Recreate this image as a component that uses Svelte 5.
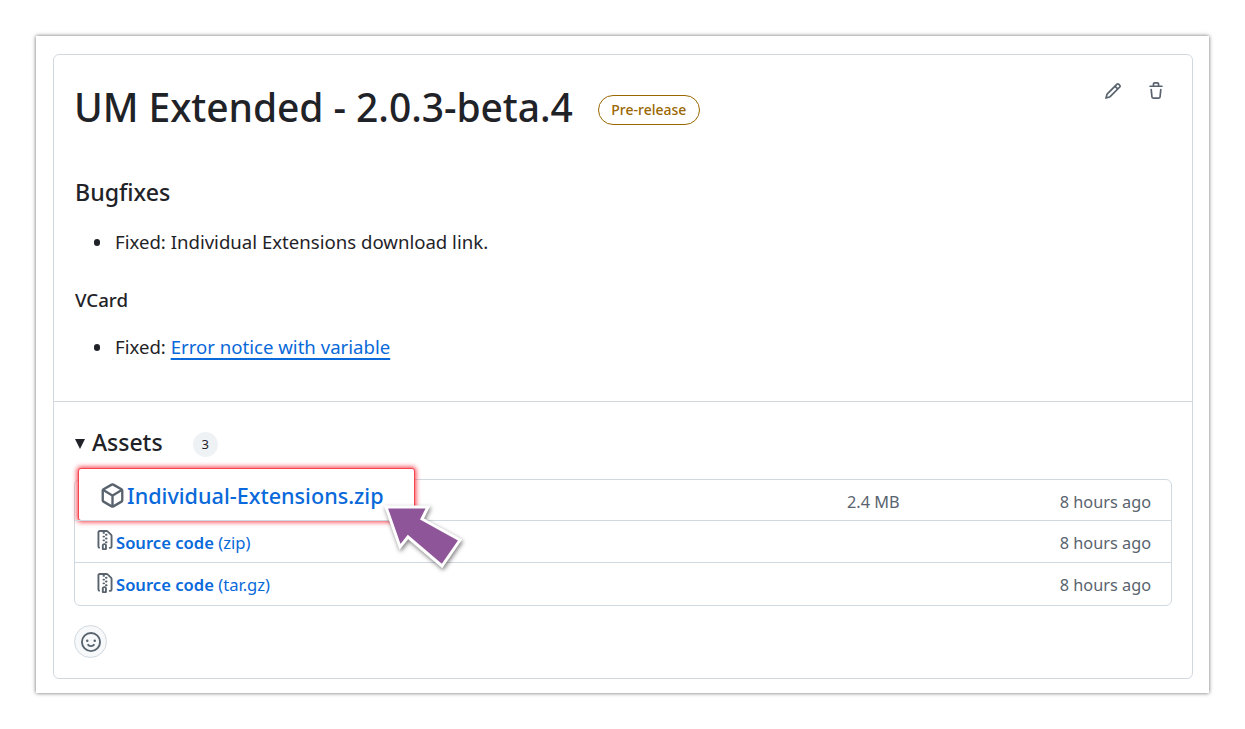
<script lang="ts">
	const assets = [
		{ name: 'Source code', kind: '(zip)' },
		{ name: 'Source code', kind: '(tar.gz)' }
	];
	const zipIcon =
		'M3.5 1.75v11.5c0 .09.048.173.126.217a.75.75 0 0 1-.752 1.298A1.748 1.748 0 0 1 2 13.25V1.75C2 .784 2.784 0 3.75 0h5.586c.464 0 .909.185 1.237.513l2.914 2.914c.329.328.513.773.513 1.237v8.586A1.75 1.75 0 0 1 12.25 15h-.5a.75.75 0 0 1 0-1.5h.5a.25.25 0 0 0 .25-.25V4.664a.25.25 0 0 0-.073-.177L9.513 1.573a.25.25 0 0 0-.177-.073H7.25a.75.75 0 0 1 0 1.5h-.5a.75.75 0 0 1 0-1.5h-3a.25.25 0 0 0-.25.25Zm3.75 8.75h.5c.966 0 1.75.784 1.75 1.75v3a.75.75 0 0 1-.75.75h-2.5a.75.75 0 0 1-.75-.75v-3c0-.966.784-1.75 1.75-1.75ZM6 5.25a.75.75 0 0 1 .75-.75h.5a.75.75 0 0 1 0 1.5h-.5A.75.75 0 0 1 6 5.25Zm.75 2.25h.5a.75.75 0 0 1 0 1.5h-.5a.75.75 0 0 1 0-1.5ZM8 6.75A.75.75 0 0 1 8.75 6h.5a.75.75 0 0 1 0 1.5h-.5A.75.75 0 0 1 8 6.75ZM8.75 3h.5a.75.75 0 0 1 0 1.5h-.5a.75.75 0 0 1 0-1.5ZM8 9.75A.75.75 0 0 1 8.75 9h.5a.75.75 0 0 1 0 1.5h-.5A.75.75 0 0 1 8 9.75Zm-1 2.5v2.25h1v-2.25a.25.25 0 0 0-.25-.25h-.5a.25.25 0 0 0-.25.25Z';
</script>

<div class="page">
	<div class="frame">
		<div class="card">
			<div class="top">
				<div class="title-row">
					<h1>UM Extended - 2.0.3-beta.4</h1>
					<span class="label">Pre-release</span>
					<div class="actions">
						<svg viewBox="0 0 16 16" width="18" height="18"><path d="M11.013 1.427a1.75 1.75 0 0 1 2.474 0l1.086 1.086a1.75 1.75 0 0 1 0 2.474l-8.61 8.61c-.21.21-.47.364-.756.445l-3.251.93a.75.75 0 0 1-.927-.928l.929-3.25c.081-.286.235-.547.445-.758l8.61-8.61Zm.176 4.823L9.75 4.81l-6.286 6.287a.253.253 0 0 0-.064.108l-.558 1.953 1.953-.558a.253.253 0 0 0 .108-.064Zm1.238-3.763a.25.25 0 0 0-.354 0L10.811 3.75l1.439 1.44 1.263-1.263a.25.25 0 0 0 0-.354Z" /></svg>
						<svg viewBox="0 0 16 16" width="18" height="18"><path d="M11 1.75V3h2.25a.75.75 0 0 1 0 1.5H2.75a.75.75 0 0 1 0-1.5H5V1.75C5 .784 5.784 0 6.75 0h2.5C10.216 0 11 .784 11 1.75ZM4.496 6.675l.66 6.6a.25.25 0 0 0 .249.225h5.19a.25.25 0 0 0 .249-.225l.66-6.6a.75.75 0 0 1 1.492.149l-.66 6.6A1.748 1.748 0 0 1 10.595 15h-5.19a1.75 1.75 0 0 1-1.741-1.575l-.66-6.6a.75.75 0 1 1 1.492-.15ZM6.5 1.75V3h3V1.75a.25.25 0 0 0-.25-.25h-2.5a.25.25 0 0 0-.25.25Z" /></svg>
					</div>
				</div>
				<h2>Bugfixes</h2>
				<ul class="first-list"><li>Fixed: Individual Extensions download link.</li></ul>
				<h3>VCard</h3>
				<ul class="last-list"><li>Fixed: <a href="#error">Error notice with variable</a></li></ul>
			</div>

			<div class="bottom">
				<div class="assets-head">
					<span class="caret"></span>
					<span class="assets-title">Assets</span>
					<span class="counter">3</span>
				</div>
				<div class="asset-list">
					<div class="row first">
						<div class="highlight">
							<svg class="pkg" viewBox="0 0 16 16" width="25" height="25"><path d="m8.878.392 5.25 3.045c.54.314.872.89.872 1.514v6.098a1.75 1.75 0 0 1-.872 1.514l-5.25 3.045a1.75 1.75 0 0 1-1.756 0l-5.25-3.045A1.75 1.75 0 0 1 1 11.049V4.951c0-.624.332-1.201.872-1.514L7.122.392a1.75 1.75 0 0 1 1.756 0ZM7.875 1.69l-4.63 2.685L8 7.133l4.755-2.758-4.63-2.685a.248.248 0 0 0-.25 0ZM2.5 5.677v5.372c0 .09.047.171.125.216l4.625 2.683V8.432Zm6.25 8.271 4.625-2.683a.25.25 0 0 0 .125-.216V5.677L8.75 8.432Z" /></svg>
							<a href="#zip" class="big-link">Individual-Extensions.zip</a>
						</div>
						<span class="size">2.4 MB</span>
						<span class="when">8 hours ago</span>
					</div>
					{#each assets as asset}
						<div class="row">
							<svg class="zip" viewBox="0 0 16 16" width="20" height="20"><path d={zipIcon} /></svg>
							<a href="#src" class="src"><b>{asset.name}</b> {asset.kind}</a>
							<span class="when">8 hours ago</span>
						</div>
					{/each}
				</div>
				<button class="react" aria-label="Add reaction">
					<svg viewBox="0 0 16 16" width="20" height="20"><path d="M8 0a8 8 0 1 1 0 16A8 8 0 0 1 8 0ZM1.5 8a6.5 6.5 0 1 0 13 0 6.5 6.5 0 0 0-13 0Zm3.82 1.636a.75.75 0 0 1 1.038.175l.007.009c.103.118.22.222.35.31.264.178.683.37 1.285.37.602 0 1.02-.192 1.285-.371.13-.088.247-.192.35-.31l.007-.008a.75.75 0 0 1 1.222.87l-.022-.015c.02.013.021.015.021.015v.001l-.001.002-.002.003-.005.007-.014.019a2.066 2.066 0 0 1-.184.213c-.16.166-.338.316-.53.445-.63.418-1.37.638-2.127.629-.946 0-1.652-.308-2.126-.63a3.331 3.331 0 0 1-.715-.657l-.014-.02-.005-.006-.002-.003v-.002h-.001l.613-.432-.614.43a.75.75 0 0 1 .183-1.044ZM12 7a1 1 0 1 1-2 0 1 1 0 0 1 2 0ZM5 8a1 1 0 1 1 0-2 1 1 0 0 1 0 2Zm5.25 2.25.592.416a97.71 97.71 0 0 0-.592-.416Z" /></svg>
				</button>
			</div>

			<svg class="arrow" viewBox="0 0 90 76" width="90" height="76">
				<polygon points="11,7 53,7 47,19 85,40 67,66 33,37 25,47" />
			</svg>
		</div>
	</div>
</div>

<style>
	:global(body) {
		background: #fff;
		font-family: 'Noto Sans', 'Open Sans', sans-serif;
		color: #1f2328;
	}

	.page {
		box-sizing: border-box;
		height: 729px;
		padding: 36px 0 0 36px;
	}

	.frame {
		box-sizing: border-box;
		width: 1173px;
		height: 657px;
		padding: 18px 16px 14px 17px;
		background: #fff;
		box-shadow: 0 0 4px rgba(0, 0, 0, 0.6);
	}

	.card {
		position: relative;
		box-sizing: border-box;
		height: 625px;
		border: 1px solid #d1d9e0;
		border-radius: 6px;
	}

	.top {
		box-sizing: border-box;
		height: 347px;
		padding: 0 21px;
		border-bottom: 1px solid #d1d9e0;
	}

	.title-row {
		display: flex;
		align-items: center;
		height: 104px;
	}

	h1 {
		margin: -2px 0 0 -1px;
		font-size: 39px;
		font-weight: 500;
		letter-spacing: -0.06px;
		white-space: nowrap;
	}

	.label {
		margin: 6px 0 0 25px;
		padding: 0 12.5px;
		height: 28px;
		line-height: 27px;
		border: 1px solid #9a6700;
		border-radius: 15px;
		font-size: 14px;
		font-weight: 500;
		color: #9a6700;
	}

	.actions {
		align-self: flex-start;
		display: flex;
		gap: 25px;
		margin: 27px 6px 0 auto;
	}

	.actions svg {
		fill: #59636e;
	}

	h2 {
		margin: 18px 0 0;
		font-size: 23.2px;
		line-height: 30px;
		font-weight: 500;
	}

	h3 {
		margin: 32px 0 0;
		font-size: 18.7px;
		line-height: 24px;
		font-weight: 500;
	}

	ul {
		list-style: none;
		margin: 0;
		padding-left: 40px;
	}

	.first-list {
		margin-top: 21px;
	}

	.last-list {
		margin-top: 21px;
	}

	li {
		position: relative;
		font-size: 18.6px;
		line-height: 28px;
	}

	li::before {
		content: '';
		position: absolute;
		left: -21.5px;
		top: 11px;
		width: 6.5px;
		height: 6.5px;
		border-radius: 50%;
		background: #1f2328;
	}

	li a {
		color: #0969da;
		text-decoration: underline;
		text-decoration-thickness: 1.5px;
		text-underline-offset: 4px;
	}

	.bottom {
		padding: 0 21px;
	}

	.assets-head {
		display: flex;
		align-items: center;
		height: 78px;
		padding-top: 2px;
		box-sizing: border-box;
	}

	.caret {
		width: 0;
		height: 0;
		border-left: 5.75px solid transparent;
		border-right: 5.75px solid transparent;
		border-top: 10px solid #1f2328;
		margin-top: 4px;
	}

	.assets-title {
		margin-left: 7px;
		font-size: 23px;
		font-weight: 500;
	}

	.counter {
		margin: 4px 0 0 30px;
		width: 25px;
		height: 25px;
		line-height: 25px;
		border-radius: 50%;
		background: #eff2f5;
		text-align: center;
		font-size: 13px;
	}

	.asset-list {
		border: 1px solid #d1d9e0;
		border-radius: 6px;
		margin: -1px -1px 0;
	}

	.row {
		position: relative;
		display: flex;
		align-items: center;
		height: 41px;
		padding: 0 20px;
		font-size: 16.3px;
		color: #59636e;
		border-top: 1px solid #d1d9e0;
	}

	.row.first {
		height: 40px;
		border-top: none;
		padding-top: 2px;
		box-sizing: border-box;
	}

	.row:last-child {
		height: 42px;
	}

	.zip {
		fill: #59636e;
		margin-top: -3px;
		flex: none;
	}

	.src {
		color: #0969da;
		text-decoration: none;
		font-size: 16.6px;
		margin: 1px 0 0 1px;
	}

	.src b {
		font-weight: 600;
	}

	.size {
		position: absolute;
		left: 772px;
		top: 11px;
	}

	.when {
		margin: 2px 0 0 auto;
	}

	.highlight {
		position: absolute;
		left: 3px;
		top: -12px;
		box-sizing: border-box;
		width: 337px;
		height: 53px;
		display: flex;
		align-items: center;
		padding: 1px 0 0 21px;
		gap: 2px;
		background: #fff;
		border: 1px solid #f5454f;
		border-radius: 3px;
		box-shadow: 0 0 5px 1px rgba(245, 35, 50, 0.9);
	}

	.pkg {
		fill: #59636e;
		flex: none;
	}

	.big-link {
		color: #0969da;
		text-decoration: none;
		font-size: 21.6px;
		font-weight: 500;
		white-space: nowrap;
	}

	.react {
		display: flex;
		align-items: center;
		justify-content: center;
		margin: 19px 0 0 -1px;
		padding: 0;
		width: 33px;
		height: 33px;
		border-radius: 50%;
		border: 1px solid #d1d9e0;
		background: #f6f8fa;
	}

	.react svg {
		fill: #59636e;
	}

	.arrow {
		position: absolute;
		left: 321px;
		top: 445px;
		overflow: visible;
		filter: drop-shadow(1px 2px 2px rgba(0, 0, 0, 0.5));
	}

	.arrow polygon {
		fill: #8e5599;
		stroke: #fff;
		stroke-width: 3;
		stroke-linejoin: miter;
	}
</style>
